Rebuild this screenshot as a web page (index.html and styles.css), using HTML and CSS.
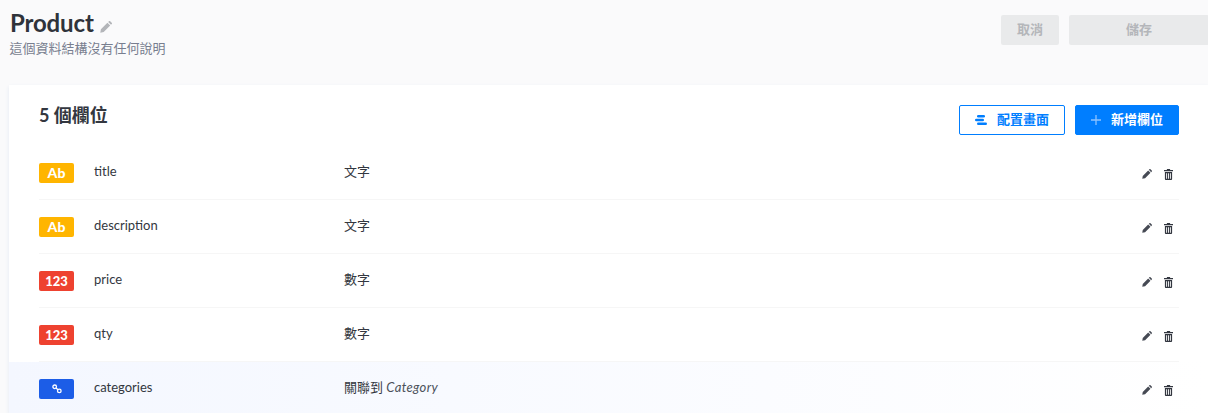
FILE: index.html
```html
<!DOCTYPE html>
<html lang="zh-Hant">
<head>
<meta charset="utf-8">
<title>Product</title>
<link rel="stylesheet" href="styles.css">
</head>
<body>
<header class="page-header">
  <div class="heading">
    <h1 class="title">Product
      <svg class="title-edit" viewBox="0 0 12 12"><path d="M0.3 11.7 0.9 8.3 7.4 1.8 10.2 4.6 3.7 11.1Z M8.2 1 8.9.3a.9.9 0 0 1 1.3 0l1.5 1.5a.9.9 0 0 1 0 1.3l-.7.7Z"/></svg>
    </h1>
    <p class="subtitle">這個資料結構沒有任何說明</p>
  </div>
  <div class="header-actions">
    <button class="btn-disabled btn-cancel">取消</button>
    <button class="btn-disabled btn-save">儲存</button>
  </div>
</header>
<main class="card">
  <div class="card-head">
    <h2 class="count">5 個欄位</h2>
    <div class="card-actions">
      <button class="btn btn-outline">
        <svg class="icon-layout" viewBox="0 0 12 10"><rect x="2" y="0" width="8" height="2.6" rx="1.3"/><rect x="0" y="3.7" width="9" height="2.6" rx="1.3"/><rect x="2" y="7.4" width="10" height="2.6" rx="1.3"/></svg>
        <span class="btn-label">配置畫面</span>
      </button>
      <button class="btn btn-primary">
        <svg class="icon-plus" viewBox="0 0 10 10"><path d="M5 0v10M0 5h10"/></svg>
        <span class="btn-label">新增欄位</span>
      </button>
    </div>
  </div>
  <ul class="rows">
    <li class="row">
      <span class="badge badge-text">Ab</span><span class="name">title</span><span class="type">文字</span>
      <span class="row-actions"><svg class="act-edit" viewBox="0 0 12 12"><path d="M0.3 11.7 0.9 8.3 7.4 1.8 10.2 4.6 3.7 11.1Z M8.2 1 8.9.3a.9.9 0 0 1 1.3 0l1.5 1.5a.9.9 0 0 1 0 1.3l-.7.7Z"/></svg><svg class="act-trash" viewBox="0 0 10 11" preserveAspectRatio="none"><path d="M3.4 0h3.2l.4 1H10v1.2H0V1h3ZM1 3h8v7a1 1 0 0 1-1 1H2a1 1 0 0 1-1-1Zm1.4 1.2v5.6h1V4.2Zm2.1 0v5.6h1V4.2Zm2.1 0v5.6h1V4.2Z" fill-rule="evenodd"/></svg></span>
    </li>
    <li class="row">
      <span class="badge badge-text">Ab</span><span class="name">description</span><span class="type">文字</span>
      <span class="row-actions"><svg class="act-edit" viewBox="0 0 12 12"><path d="M0.3 11.7 0.9 8.3 7.4 1.8 10.2 4.6 3.7 11.1Z M8.2 1 8.9.3a.9.9 0 0 1 1.3 0l1.5 1.5a.9.9 0 0 1 0 1.3l-.7.7Z"/></svg><svg class="act-trash" viewBox="0 0 10 11" preserveAspectRatio="none"><path d="M3.4 0h3.2l.4 1H10v1.2H0V1h3ZM1 3h8v7a1 1 0 0 1-1 1H2a1 1 0 0 1-1-1Zm1.4 1.2v5.6h1V4.2Zm2.1 0v5.6h1V4.2Zm2.1 0v5.6h1V4.2Z" fill-rule="evenodd"/></svg></span>
    </li>
    <li class="row">
      <span class="badge badge-number">123</span><span class="name">price</span><span class="type">數字</span>
      <span class="row-actions"><svg class="act-edit" viewBox="0 0 12 12"><path d="M0.3 11.7 0.9 8.3 7.4 1.8 10.2 4.6 3.7 11.1Z M8.2 1 8.9.3a.9.9 0 0 1 1.3 0l1.5 1.5a.9.9 0 0 1 0 1.3l-.7.7Z"/></svg><svg class="act-trash" viewBox="0 0 10 11" preserveAspectRatio="none"><path d="M3.4 0h3.2l.4 1H10v1.2H0V1h3ZM1 3h8v7a1 1 0 0 1-1 1H2a1 1 0 0 1-1-1Zm1.4 1.2v5.6h1V4.2Zm2.1 0v5.6h1V4.2Zm2.1 0v5.6h1V4.2Z" fill-rule="evenodd"/></svg></span>
    </li>
    <li class="row">
      <span class="badge badge-number">123</span><span class="name">qty</span><span class="type">數字</span>
      <span class="row-actions"><svg class="act-edit" viewBox="0 0 12 12"><path d="M0.3 11.7 0.9 8.3 7.4 1.8 10.2 4.6 3.7 11.1Z M8.2 1 8.9.3a.9.9 0 0 1 1.3 0l1.5 1.5a.9.9 0 0 1 0 1.3l-.7.7Z"/></svg><svg class="act-trash" viewBox="0 0 10 11" preserveAspectRatio="none"><path d="M3.4 0h3.2l.4 1H10v1.2H0V1h3ZM1 3h8v7a1 1 0 0 1-1 1H2a1 1 0 0 1-1-1Zm1.4 1.2v5.6h1V4.2Zm2.1 0v5.6h1V4.2Zm2.1 0v5.6h1V4.2Z" fill-rule="evenodd"/></svg></span>
    </li>
    <li class="row row-hover">
      <span class="badge badge-relation"><svg class="icon-link" viewBox="0 0 10 10"><circle cx="2.7" cy="2.8" r="1.8"/><circle cx="7.3" cy="6.9" r="1.8"/><path d="M4 4 6 5.7"/></svg></span><span class="name">categories</span><span class="type">關聯到 <em class="target">Category</em></span>
      <span class="row-actions"><svg class="act-edit" viewBox="0 0 12 12"><path d="M0.3 11.7 0.9 8.3 7.4 1.8 10.2 4.6 3.7 11.1Z M8.2 1 8.9.3a.9.9 0 0 1 1.3 0l1.5 1.5a.9.9 0 0 1 0 1.3l-.7.7Z"/></svg><svg class="act-trash" viewBox="0 0 10 11" preserveAspectRatio="none"><path d="M3.4 0h3.2l.4 1H10v1.2H0V1h3ZM1 3h8v7a1 1 0 0 1-1 1H2a1 1 0 0 1-1-1Zm1.4 1.2v5.6h1V4.2Zm2.1 0v5.6h1V4.2Zm2.1 0v5.6h1V4.2Z" fill-rule="evenodd"/></svg></span>
    </li>
  </ul>
</main>
</body>
</html>
```
FILE: styles.css
```css
* { box-sizing: border-box; }
html, body { margin: 0; padding: 0; }
body {
  height: 413px;
  overflow: hidden;
  background: #fafafb;
  font-family: Lato, "Noto Sans CJK TC", sans-serif;
  font-size: 13px;
  color: #333740;
}
.page-header {
  display: flex;
  justify-content: space-between;
  height: 85px;
  padding: 8px 0 0 10px;
}
.title {
  margin: 0;
  display: flex;
  align-items: center;
  gap: 6px;
  height: 30px;
  font-size: 24px;
  font-weight: 700;
  line-height: 30px;
  letter-spacing: -0.15px;
  color: #2f333a;
}
.title-edit { width: 12px; height: 12px; margin-top: 7px; fill: #b3b5b9; }
.subtitle {
  margin: 1px 0 0 -0.5px;
  font-size: 13px;
  line-height: 18px;
  color: #787e8f;
}
.header-actions { display: flex; gap: 10px; padding-top: 7px; margin-right: -1px; }
.btn-disabled {
  height: 30px;
  padding: 0 0 4px;
  border: 0;
  border-radius: 2px;
  background: #e9eaeb;
  color: #b4b6ba;
  font: 600 13px Lato, "Noto Sans CJK TC", sans-serif;
}
.btn-cancel { width: 58px; }
.btn-save { width: 140px; }
.card {
  margin-left: 9px;
  height: 328px;
  background: #fff;
  box-shadow: 0 2px 4px #e3e9f3;
}
.card-head {
  display: flex;
  justify-content: space-between;
  height: 61px;
  padding: 19px 29px 0 30px;
}
.count {
  margin: 0;
  font-size: 18px;
  font-weight: 700;
  line-height: 22px;
  color: #333740;
}
.card-actions { display: flex; gap: 10px; padding-top: 1px; }
.btn {
  display: flex;
  align-items: center;
  height: 30px;
  border-radius: 2px;
  font: 600 13px Lato, "Noto Sans CJK TC", sans-serif;
}
.btn-label { margin-top: -4px; }
.btn-outline {
  width: 106px;
  padding: 0 0 0 15px;
  gap: 10px;
  border: 1px solid #007eff;
  background: #fff;
  color: #007eff;
}
.btn-primary {
  width: 104px;
  padding: 0 0 0 15px;
  gap: 10px;
  border: 1px solid #007eff;
  background: #007eff;
  color: #fff;
}
.icon-layout { width: 12px; height: 10px; fill: #007eff; }
.icon-plus { width: 10px; height: 10px; stroke: #8cc2ff; stroke-width: 1.3; fill: none; }
.rows { margin: 0; padding: 0; list-style: none; }
.row {
  position: relative;
  display: flex;
  align-items: center;
  height: 54px;
  padding: 0 29px 0 30px;
}
.row::after {
  content: "";
  position: absolute;
  left: 30px;
  right: 29px;
  bottom: 0;
  height: 1px;
  background: #f6f6f6;
}
.row:last-child::after { display: none; }
.row-hover { background: linear-gradient(90deg, #f4f7ff 0%, #ffffff 100%); }
.badge {
  display: flex;
  align-items: center;
  justify-content: center;
  flex: none;
  width: 35px;
  height: 20px;
  border-radius: 2px;
  color: #fff;
  font-size: 14px;
  font-weight: 900;
}
.badge-text { background: #ffb500; padding-bottom: 1px; }
.badge-number { background: #ee4230; font-size: 13px; }
.badge-relation { background: #1c5de7; }
.icon-link { width: 10px; height: 10px; fill: none; stroke: #fff; stroke-width: 1.3; }
.name { width: 250px; margin: -4px 0 0 20px; font-size: 13px; line-height: 18px; }
.type { flex: 1; margin-top: -4px; font-size: 13px; line-height: 18px; color: #333740; }
.target { color: #4b515a; letter-spacing: 0.35px; }
.row-actions { display: flex; align-items: center; gap: 12px; margin-top: 2px; margin-right: 6px; }
.act-edit { width: 10px; height: 10px; fill: #464a54; }
.act-trash { width: 9px; height: 11px; fill: #333740; }
```
